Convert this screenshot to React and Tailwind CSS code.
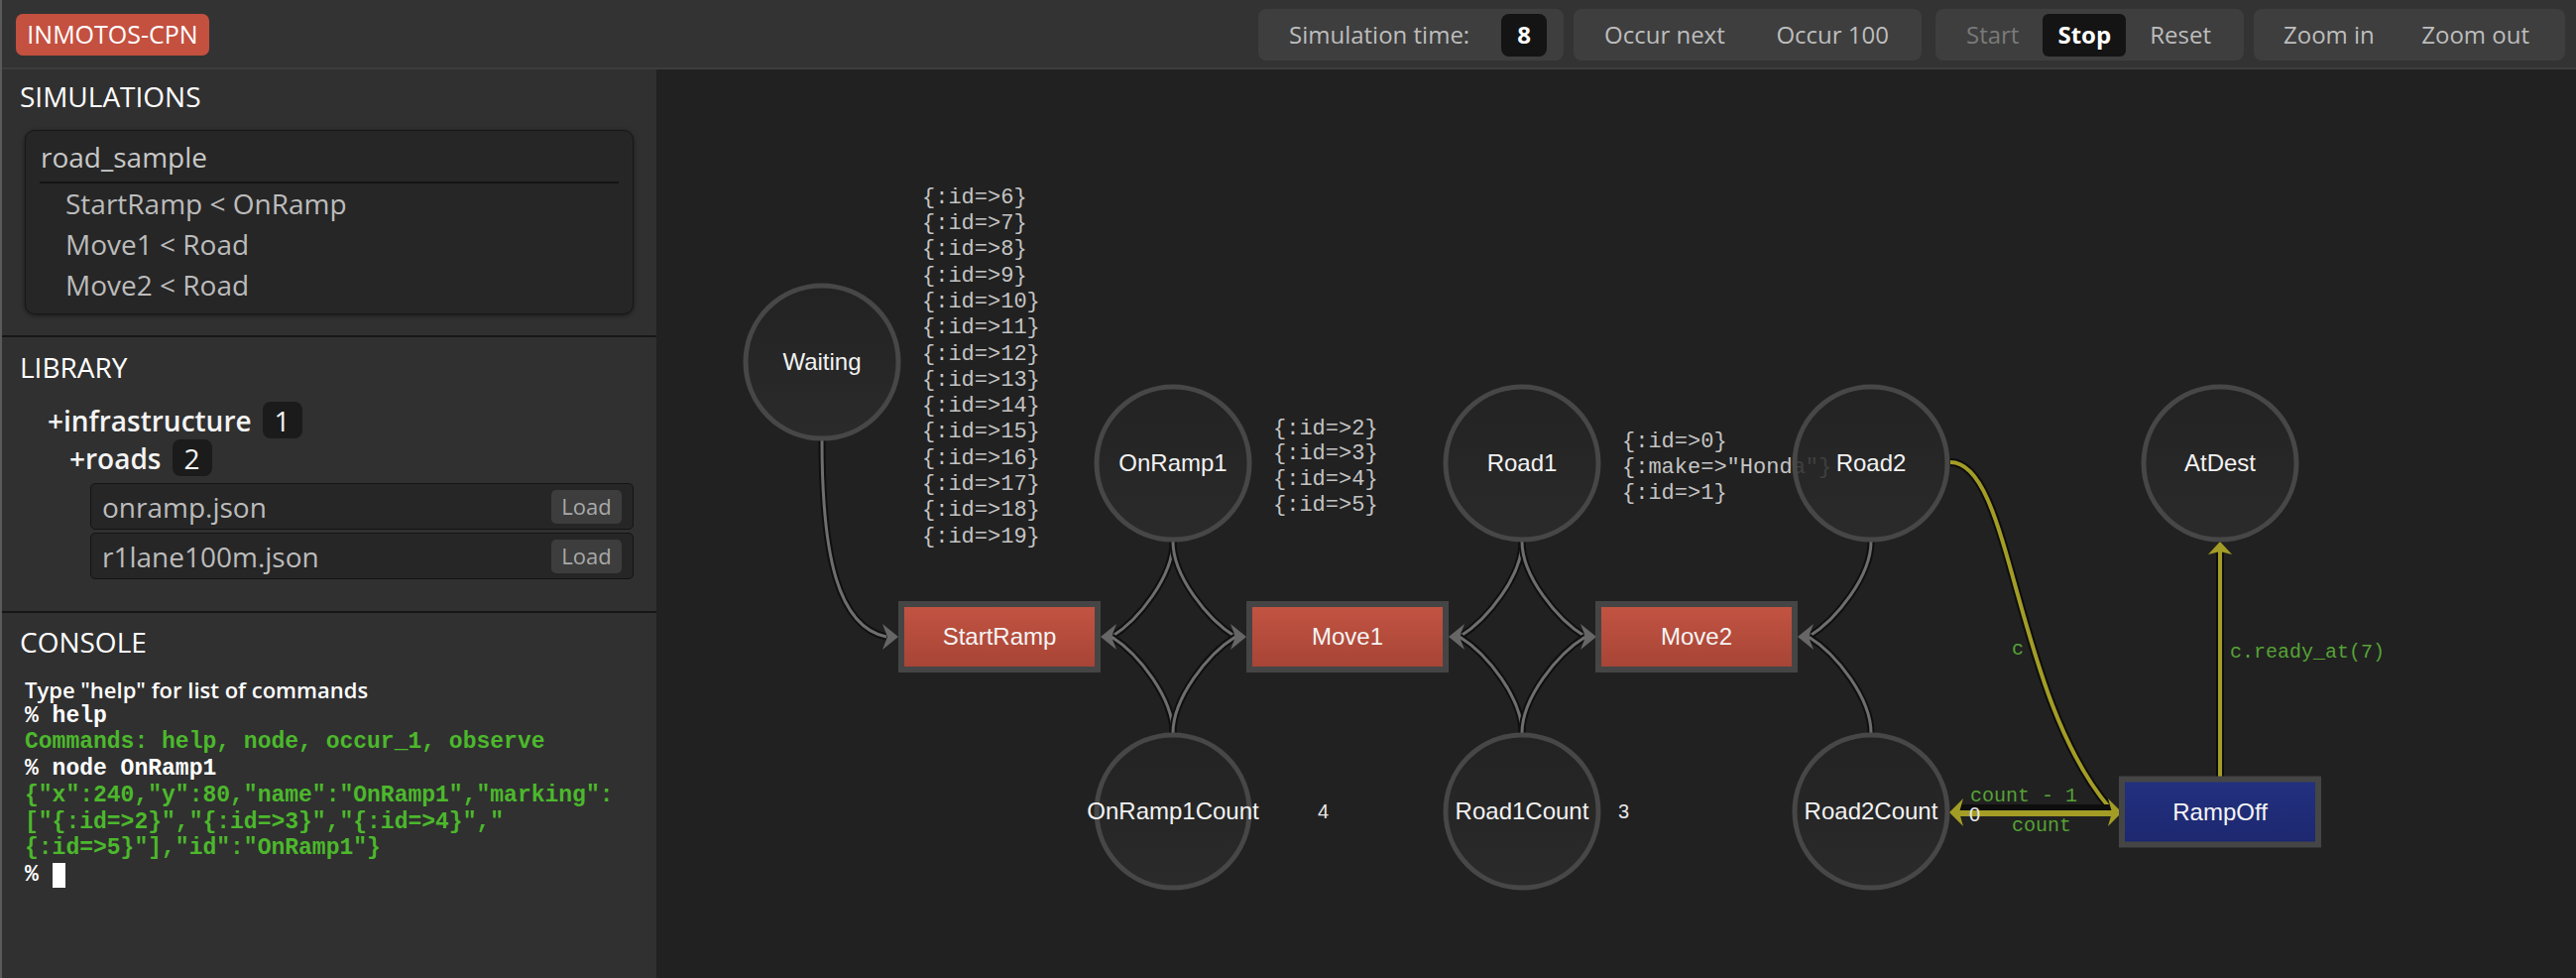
import React from "react";

const MONO = "Liberation Mono, Courier New, monospace";
const SANS = "Liberation Sans, Arial, sans-serif";

const places = [
  { id: "Waiting", x: 829, y: 365 },
  { id: "OnRamp1", x: 1183, y: 467 },
  { id: "Road1", x: 1535, y: 467 },
  { id: "Road2", x: 1887, y: 467 },
  { id: "AtDest", x: 2239, y: 467 },
  { id: "OnRamp1Count", x: 1183, y: 818 },
  { id: "Road1Count", x: 1535, y: 818 },
  { id: "Road2Count", x: 1887, y: 818 },
];

const transitions = [
  { id: "StartRamp", x: 1008, y: 642, fill: "url(#redg)" },
  { id: "Move1", x: 1359, y: 642, fill: "url(#redg)" },
  { id: "Move2", x: 1711, y: 642, fill: "url(#redg)" },
  { id: "RampOff", x: 2239, y: 818.5, fill: "url(#blueg)" },
];

function arrowPath(x, y, dir, len = 16, half = 13, notch = 5) {
  if (dir === "left")
    return `M ${x} ${y} L ${x + len} ${y - half} L ${x + len - notch} ${y} L ${x + len} ${y + half} Z`;
  if (dir === "right")
    return `M ${x} ${y} L ${x - len} ${y - half} L ${x - len + notch} ${y} L ${x - len} ${y + half} Z`;
  if (dir === "up")
    return `M ${x} ${y} L ${x - half} ${y + len} L ${x} ${y + len - notch} L ${x + half} ${y + len} Z`;
  return "";
}

const grayArcs = [];
const cols = [
  { px: 1183, left: 1110, right: 1257 },
  { px: 1535, left: 1461, right: 1610 },
  { px: 1887, left: 1813, right: null },
];
cols.forEach((c) => {
  [546, 739].forEach((py) => {
    grayArcs.push({ px: c.px, py, tip: c.left, dir: "left" });
    if (c.right) grayArcs.push({ px: c.px, py, tip: c.right, dir: "right" });
  });
});

function arcD(a) {
  const ty = 642;
  const back = a.dir === "left" ? a.tip + 11 : a.tip - 11;
  const dx = back - a.px;
  const dy = ty - a.py;
  return `M ${a.px} ${a.py} C ${a.px} ${a.py + 0.36 * dy}, ${a.px + 0.55 * dx} ${ty - 0.18 * dy}, ${back} ${ty}`;
}

const waitingTokens = Array.from({ length: 14 }, (_, i) => `{:id=>${i + 6}}`);
const onrampTokens = ["{:id=>2}", "{:id=>3}", "{:id=>4}", "{:id=>5}"];
const road1Tokens = ["{:id=>0}", '{:make=>"Honda"}', "{:id=>1}"];

function Graph() {
  return (
    <svg className="absolute inset-0 w-full h-full" xmlns="http://www.w3.org/2000/svg">
      <defs>
        <linearGradient id="placeg" x1="0" y1="0" x2="0" y2="1">
          <stop offset="0" stopColor="#232323" />
          <stop offset="1" stopColor="#2c2c2c" />
        </linearGradient>
        <linearGradient id="redg" x1="0" y1="0" x2="0" y2="1">
          <stop offset="0" stopColor="#c25342" />
          <stop offset="1" stopColor="#a74536" />
        </linearGradient>
        <linearGradient id="blueg" x1="0" y1="0" x2="0" y2="1">
          <stop offset="0" stopColor="#22307f" />
          <stop offset="1" stopColor="#1d2870" />
        </linearGradient>
      </defs>
      <g transform="translate(-662,-70)">
        <path d="M 829 444 C 829 560, 845 632, 894 642" fill="none" stroke="#0f0f0f" strokeWidth="7" />
        <path d="M 829 444 C 829 560, 845 632, 894 642" fill="none" stroke="#6e6e6e" strokeWidth="3" />
        <path d={arrowPath(906, 642, "right")} fill="#666" />

        {grayArcs.map((a, i) => (
          <g key={i}>
            <path d={arcD(a)} fill="none" stroke="#0f0f0f" strokeWidth="7" />
            <path d={arcD(a)} fill="none" stroke="#6e6e6e" strokeWidth="3" />
          </g>
        ))}
        {[
          [1110, "left"],
          [1257, "right"],
          [1461, "left"],
          [1610, "right"],
          [1813, "left"],
        ].map(([x, d], i) => (
          <path key={i} d={arrowPath(x, 642, d)} fill="#666" />
        ))}

        <path d="M 1967 466 C 2030 466, 2030 700, 2128 815" fill="none" stroke="#0d0d0d" strokeWidth="8" />
        <path d="M 1967 466 C 2030 466, 2030 700, 2128 815" fill="none" stroke="#a39d26" strokeWidth="4" />
        <line x1="1975" y1="817" x2="2130" y2="817" stroke="#0d0d0d" strokeWidth="12" />
        <line x1="1975" y1="820" x2="2130" y2="820" stroke="#a39d26" strokeWidth="6" />
        <path d={arrowPath(2140, 819, "right", 14, 14, 4)} fill="#a39d26" />
        <path d={arrowPath(1966, 819, "left", 14, 14, 4)} fill="#a39d26" />
        <line x1="2239" y1="556" x2="2239" y2="783" stroke="#0d0d0d" strokeWidth="8" />
        <line x1="2239" y1="556" x2="2239" y2="783" stroke="#a39d26" strokeWidth="4" />
        <path d={arrowPath(2239, 546, "up", 13, 12, 3)} fill="#a39d26" />

        <g fontFamily={MONO} fontSize="20" fill="#56a236">
          <text x="2029" y="660">c</text>
          <text x="2249" y="663">c.ready_at(7)</text>
          <text x="1987" y="808">count - 1</text>
          <text x="2029" y="838">count</text>
        </g>

        <g fontFamily={MONO} fontSize="22" fill="#c4c4c4">
          {waitingTokens.map((t, i) => (
            <text key={t} x="930" y={197 + i * 26.3} dy="0.35em">
              {t}
            </text>
          ))}
          {onrampTokens.map((t, i) => (
            <text key={t} x="1284" y={430 + i * 25.7} dy="0.35em">
              {t}
            </text>
          ))}
          {road1Tokens.map((t, i) => (
            <text key={t} x="1636" y={443 + i * 26} dy="0.35em">
              {t}
            </text>
          ))}
        </g>

        {places.map((p) => (
          <circle key={p.id} cx={p.x} cy={p.y} r="77" fill="url(#placeg)" fillOpacity="0.85" stroke="#474747" strokeWidth="5" />
        ))}
        <g fontFamily={SANS} fontSize="24" fill="#f2f2f2" textAnchor="middle">
          {places.map((p) => (
            <text key={p.id} x={p.x} y={p.y} dy="0.35em">
              {p.id}
            </text>
          ))}
        </g>
        <g fontFamily={SANS} fontSize="20" fill="#e8e8e8">
          <text x="1329" y="818" dy="0.35em">4</text>
          <text x="1632" y="818" dy="0.35em">3</text>
          <text x="1986" y="821" dy="0.35em">0</text>
        </g>

        {transitions.map((t) => (
          <g key={t.id}>
            <rect x={t.x - 102} y={t.y - 36} width="204" height="72" fill="#454545" />
            <rect x={t.x - 96} y={t.y - 30} width="192" height="60" fill={t.fill} />
            <text x={t.x} y={t.y} dy="0.35em" textAnchor="middle" fontFamily={SANS} fontSize="24" fill="#f4f4f4">
              {t.id}
            </text>
          </g>
        ))}
      </g>
    </svg>
  );
}

function Sidebar() {
  return (
    <div className="w-[660px] shrink-0 bg-[#303030] flex flex-col">
      <div className="h-[270px] border-b-2 border-[#161616] pt-[11px]">
        <div className="ml-[18px] text-[28px] leading-[32px] text-white">SIMULATIONS</div>
        <div className="ml-[23px] mt-[18px] w-[614px] rounded-[10px] bg-[#262626] border border-[#181818] shadow-[0_1px_4px_rgba(0,0,0,0.5)] pb-[8px]">
          <div className="h-[51px] pl-[15px] flex items-center text-[28px] text-[#c8c8c8]">road_sample</div>
          <div className="mx-[14px] h-[2px] bg-[#141414]" />
          <div className="pl-[40px] text-[28px] leading-[41px] text-[#bcbcbc]">
            <div>StartRamp &lt; OnRamp</div>
            <div>Move1 &lt; Road</div>
            <div>Move2 &lt; Road</div>
          </div>
        </div>
      </div>

      <div className="h-[278px] border-b-2 border-[#161616] pt-[14px]">
        <div className="ml-[18px] text-[28px] leading-[32px] text-white">LIBRARY</div>
        <div className="ml-[46px] mt-[19px] h-[37px] flex items-center gap-[11px] text-[28px] font-semibold text-[#f4f4f4]">
          <span>+infrastructure</span>
          <span className="w-[40px] h-[37px] rounded-[8px] bg-[#1b1b1b] flex items-center justify-center font-normal">1</span>
        </div>
        <div className="ml-[68px] mt-[1px] h-[37px] flex items-center gap-[11px] text-[28px] font-semibold text-[#f4f4f4]">
          <span>+roads</span>
          <span className="w-[40px] h-[37px] rounded-[8px] bg-[#1b1b1b] flex items-center justify-center font-normal">2</span>
        </div>
        <div className="ml-[89px] mt-[7px] w-[548px] flex flex-col gap-[3px]">
          {["onramp.json", "r1lane100m.json"].map((f) => (
            <div
              key={f}
              className="h-[47px] rounded-[5px] bg-[#262626] border border-[#141414] flex items-center justify-between pl-[11px] pr-[11px]"
            >
              <span className="text-[28px] text-[#bcbcbc]">{f}</span>
              <span className="w-[71px] h-[34px] rounded-[5px] bg-[#3d3d3d] flex items-center justify-center text-[22px] text-[#a9a9a9]">
                Load
              </span>
            </div>
          ))}
        </div>
      </div>

      <div className="flex-1 pt-[13px]">
        <div className="ml-[18px] text-[28px] leading-[32px] text-white">CONSOLE</div>
        <div className="ml-[23px] mt-[19px] leading-[26.7px]">
          <div className="text-[22px] font-semibold text-white">Type "help" for list of commands</div>
          <div className="font-['Liberation_Mono',monospace] text-[23px] font-bold">
            <div className="text-white">% help</div>
            <div className="text-[#4cb82c]">Commands: help, node, occur_1, observe</div>
            <div className="text-white">% node OnRamp1</div>
            <div className="text-[#4cb82c]">{'{"x":240,"y":80,"name":"OnRamp1","marking":'}</div>
            <div className="text-[#4cb82c]">{'["{:id=>2}","{:id=>3}","{:id=>4}","'}</div>
            <div className="text-[#4cb82c]">{'{:id=>5}"],"id":"OnRamp1"}'}</div>
            <div className="text-white flex items-center">
              <span>%&nbsp;</span>
              <span className="inline-block w-[13px] h-[25px] bg-white" />
            </div>
          </div>
        </div>
      </div>
    </div>
  );
}

function Header() {
  return (
    <div className="h-[70px] shrink-0 bg-[#333333] border-b-2 border-[#3d3d3d] flex items-center justify-between pl-[14px] pr-[11px] pt-[2px]">
      <div className="w-[195px] h-[42px] rounded-[7px] bg-[#c4503f] flex items-center justify-center text-white text-[25px]">
        INMOTOS-CPN
      </div>
      <div className="flex items-center text-[24px] text-[#bdbdbd]">
        <div className="w-[308px] h-[52px] rounded-[8px] bg-[#3e3e3e] flex items-center justify-between pl-[31px] pr-[17px]">
          <span>Simulation time:</span>
          <span className="w-[46px] h-[43px] rounded-[8px] bg-[#141414] text-white font-bold flex items-center justify-center">
            8
          </span>
        </div>
        <div className="ml-[10px] w-[351px] h-[52px] rounded-[8px] bg-[#3e3e3e] flex items-center justify-between pl-[31px] pr-[33px]">
          <span>Occur next</span>
          <span>Occur 100</span>
        </div>
        <div className="ml-[14px] w-[311px] h-[52px] rounded-[8px] bg-[#3e3e3e] flex items-center justify-between pl-[31px] pr-[33px]">
          <span className="text-[#7a7a7a]">Start</span>
          <span className="w-[84px] h-[43px] rounded-[6px] bg-[#141414] text-white font-bold flex items-center justify-center">
            Stop
          </span>
          <span>Reset</span>
        </div>
        <div className="ml-[10px] w-[314px] h-[52px] rounded-[8px] bg-[#3e3e3e] flex items-center justify-between pl-[30px] pr-[36px]">
          <span>Zoom in</span>
          <span>Zoom out</span>
        </div>
      </div>
    </div>
  );
}

export default function App() {
  return (
    <div className="w-[2598px] h-[986px] overflow-hidden flex flex-col bg-[#212121] border-l-2 border-[#5a5a5a] font-['Open_Sans','Liberation_Sans',sans-serif]">
      <Header />
      <div className="flex flex-1 min-h-0">
        <Sidebar />
        <div className="relative flex-1 bg-[#212121]">
          <Graph />
        </div>
      </div>
    </div>
  );
}
